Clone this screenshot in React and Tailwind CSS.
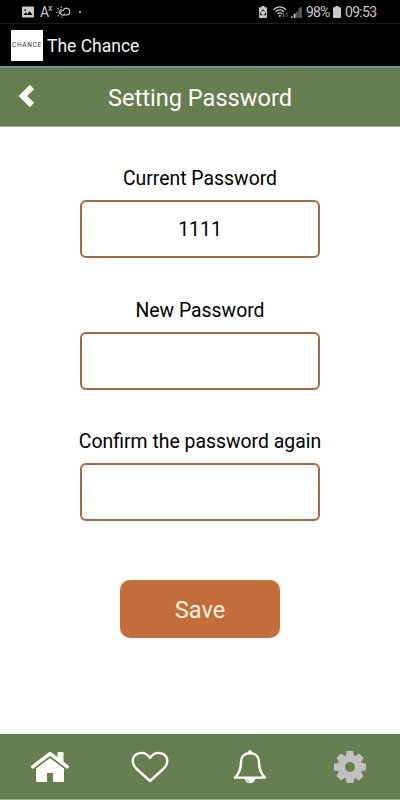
import {useState} from "react";

function StatusBar() {
    return (
        <div className="flex h-6 items-center justify-between border-b border-[#1c1c1c] bg-black pl-[22px] pr-[23px] text-[#c9c9c9]">
            <div className="flex items-center">
                <svg width="12" height="12" viewBox="0 0 12 12">
                    <path
                        fill="currentColor"
                        fillRule="evenodd"
                        d="M1 .5h10a1 1 0 0 1 1 1v9a1 1 0 0 1-1 1H1a1 1 0 0 1-1-1v-9a1 1 0 0 1 1-1ZM1.4 9h9.200L7.700 5.200 5.300 8 3.600 6.300 1.400 9Zm1.100-5.800v1.500H4V3.200H2.500Z"
                    />
                </svg>
                <span className="ml-[6px] w-[8px] text-sm leading-none tracking-[-1px]">A</span>
                <span className="-mt-[6px] w-[4px] text-[9px] leading-none">x</span>
                <svg className="ml-[4px]" width="15" height="12" viewBox="0 0 15 12" fill="none" stroke="currentColor" strokeLinecap="round">
                    <path strokeWidth="1.1" d="M6.500 9h4a3.400 3.400 0 1 0-3.300-4.500 2.300 2.300 0 1 0 1.500 3.600"/>
                    <path strokeWidth="1.1" d="M5.300 3.500a2.600 2.600 0 0 0-1.300 4.400M.5 6.200h.6M2 2.400l.4.4M5.200.8v.6M2 10l.4-.4M5.400 11.200v-.2"/>
                </svg>
                <span className="ml-[8px] size-[2px] rounded-full bg-[#c9c9c9]"></span>
            </div>
            <div className="flex items-center">
                <svg width="8" height="12" viewBox="0 0 8 12">
                    <path fill="currentColor" d="M2.400 0h3.200v1.300H7a1 1 0 0 1 1 1V11a1 1 0 0 1-1 1H1a1 1 0 0 1-1-1V2.300a1 1 0 0 1 1-1h1.400Z"/>
                    <path fill="none" stroke="#000" strokeWidth="1" d="M2.500 5.400 4 3.700l1.500 1.700M1.600 6.600 1.200 8.800h2M6.400 6.600l.4 2.200h-2"/>
                </svg>
                <svg className="ml-[6px]" width="16" height="12" viewBox="0 0 16 12" fill="none" stroke="currentColor">
                    <path strokeWidth="1.3" d="M.5 3.700C4-.1 9.500-.1 13 3.700M2.500 5.900c2.400-2.700 6.200-2.700 8.500 0M4.400 8c1.400-1.600 3.400-1.600 4.800 0"/>
                    <path fill="currentColor" stroke="none" d="m6.800 11.200-1.400-1.700c.8-.7 2-.7 2.800 0Z"/>
                    <path stroke="#666" strokeWidth=".9" d="M10.500 6.800v4M9 9.400l1.500 1.600L12 9.400M14 11V7M12.500 8.300 14 6.800l1.500 1.500"/>
                </svg>
                <svg className="ml-[2px]" width="11" height="12" viewBox="0 0 11 12">
                    <path fill="#555" d="M7.200 2.800 11 .5V12H7.200Z"/>
                    <path fill="currentColor" d="M0 10.300h1.400V12H0ZM2.600 8.200l2-1.200v5h-2Z"/>
                    <path fill="#555" d="M4.800 6.800 6.800 5v7h-2Z"/>
                </svg>
                <span className="ml-[4px] w-[23px] whitespace-nowrap pt-px text-sm leading-none tracking-[-0.9px]">98%</span>
                <svg className="ml-[4px]" width="8" height="12" viewBox="0 0 8 12">
                    <path fill="currentColor" d="M2.400 0h3.200v1.300H7a1 1 0 0 1 1 1V11a1 1 0 0 1-1 1H1a1 1 0 0 1-1-1V2.300a1 1 0 0 1 1-1h1.400Z"/>
                </svg>
                <span className="ml-[4px] w-[32px] whitespace-nowrap pt-px text-sm leading-none tracking-[-0.7px]">09:53</span>
            </div>
        </div>
    );
}

function AppBar() {
    return (
        <div className="flex h-11 items-center border-b-2 border-[#5b9cad] bg-black pl-[11px]">
            <div className="flex h-[31px] w-8 items-center justify-center bg-white pt-[2px] text-[6.5px] tracking-[0.7px] text-[#333]">
                CHANCE
            </div>
            <span className="ml-[4px] pt-[3px] text-[17.5px] leading-none text-[#f2f2f2]">The Chance</span>
        </div>
    );
}

function Field({label, value, onChange}) {
    return (
        <label className="flex flex-col items-center">
            <span className="whitespace-nowrap pt-px text-[19.4px] leading-6 text-black">{label}</span>
            <input
                type="text"
                value={value}
                onChange={(e) => onChange(e.target.value)}
                className="mt-[9px] h-[58px] w-60 rounded-md border-2 border-[#a9683c] bg-white text-center text-[19.4px] text-black outline-none"
            />
        </label>
    );
}

function BottomNav() {
    return (
        <nav className="grid h-[66px] grid-cols-4 place-items-center border-b border-t border-b-[#a5b491] border-t-[#5c7148] bg-[#677e50] text-[#fdfdf5]">
            <svg width="40" height="32" viewBox="0 0 40 32">
                <path fill="currentColor" d="M20 7 34 17.500V30a1 1 0 0 1-1 1H23v-9h-6v9H7a1 1 0 0 1-1-1V17.500Z"/>
                <path fill="none" stroke="#677e50" strokeWidth="3.600" d="M2.700 17.300 20 4.100l17.300 13.200"/>
                <path fill="currentColor" d="M28.500 1h4a1 1 0 0 1 1 1v10.500l-6-4.500V2a1 1 0 0 1 1-1Z"/>
                <path fill="none" stroke="currentColor" strokeWidth="3.500" strokeLinecap="round" strokeLinejoin="round" d="M2.700 15.800 20 2.600l17.300 13.200"/>
            </svg>
            <svg width="38" height="32" viewBox="0 0 38 32">
                <path
                    fill="none"
                    stroke="currentColor"
                    strokeWidth="2.4"
                    strokeLinejoin="round"
                    d="M19 30 5.200 17.500C-.2 12.200.9 4.200 7.600 2.300 12.200 1 16.400 3 19 7c2.600-4 6.800-6 11.400-4.700 6.700 1.900 7.800 9.900 2.400 15.200Z"
                />
            </svg>
            <svg width="34" height="36" viewBox="0 0 34 36">
                <circle cx="17" cy="2.800" r="1.900" fill="currentColor"/>
                <path
                    fill="none"
                    stroke="currentColor"
                    strokeWidth="2.4"
                    strokeLinejoin="round"
                    d="M17 4.300C10.500 4.300 8 8.500 8 13c0 7-1.600 11.500-6 15.600h30C27.600 24.500 26 20 26 13c0-4.500-2.500-8.700-9-8.700Z"
                />
                <path fill="currentColor" d="M11.700 29h10.600a5.300 5.300 0 0 1-10.600 0Z"/>
                <path fill="none" stroke="#677e50" strokeWidth=".8" d="M14 30.500c.3 1.300 1.200 2.200 2.500 2.400"/>
            </svg>
            <svg width="32" height="32" viewBox="-16 -16 32 32" className="text-[#c1c1bf]">
                <circle r="8.600" fill="none" stroke="currentColor" strokeWidth="7.200"/>
                {[0, 45, 90, 135, 180, 225, 270, 315].map((angle) => (
                    <path key={angle} fill="currentColor" transform={`rotate(${angle})`} d="M-4.400-10.500-3.200-16h6.400l1.200 5.500Z"/>
                ))}
            </svg>
        </nav>
    );
}

export default function App() {
    const [current, setCurrent] = useState("1111");
    const [password, setPassword] = useState("");
    const [confirm, setConfirm] = useState("");

    return (
        <div className="flex h-[800px] w-[400px] flex-col overflow-hidden bg-[#fefefe] font-['Roboto',sans-serif]">
            <StatusBar/>
            <AppBar/>
            <header className="grid h-[59px] grid-cols-[54px_1fr_54px] items-center border-b border-[#a5b491] bg-[#677e50] text-[#fdfdf5]">
                <button className="ml-[18px] flex h-full items-center pb-[2px]" aria-label="Back">
                    <svg width="18" height="24" viewBox="0 0 18 24">
                        <path fill="none" stroke="currentColor" strokeWidth="6" d="M14 3 4.800 12l9.200 9"/>
                    </svg>
                </button>
                <h1 className="pt-[2px] text-center text-[23.6px] leading-7">Setting Password</h1>
            </header>
            <main className="flex flex-1 flex-col items-center pt-[39px]">
                <div className="flex flex-col gap-[39.5px]">
                    <Field label="Current Password" value={current} onChange={setCurrent}/>
                    <Field label="New Password" value={password} onChange={setPassword}/>
                    <Field label="Confirm the password again" value={confirm} onChange={setConfirm}/>
                </div>
                <button className="mt-[59px] h-[58px] w-40 rounded-[10px] bg-[#c36d3b] pt-[3px] text-[23.6px] text-[#fdf6e0]">Save</button>
            </main>
            <BottomNav/>
        </div>
    );
}
